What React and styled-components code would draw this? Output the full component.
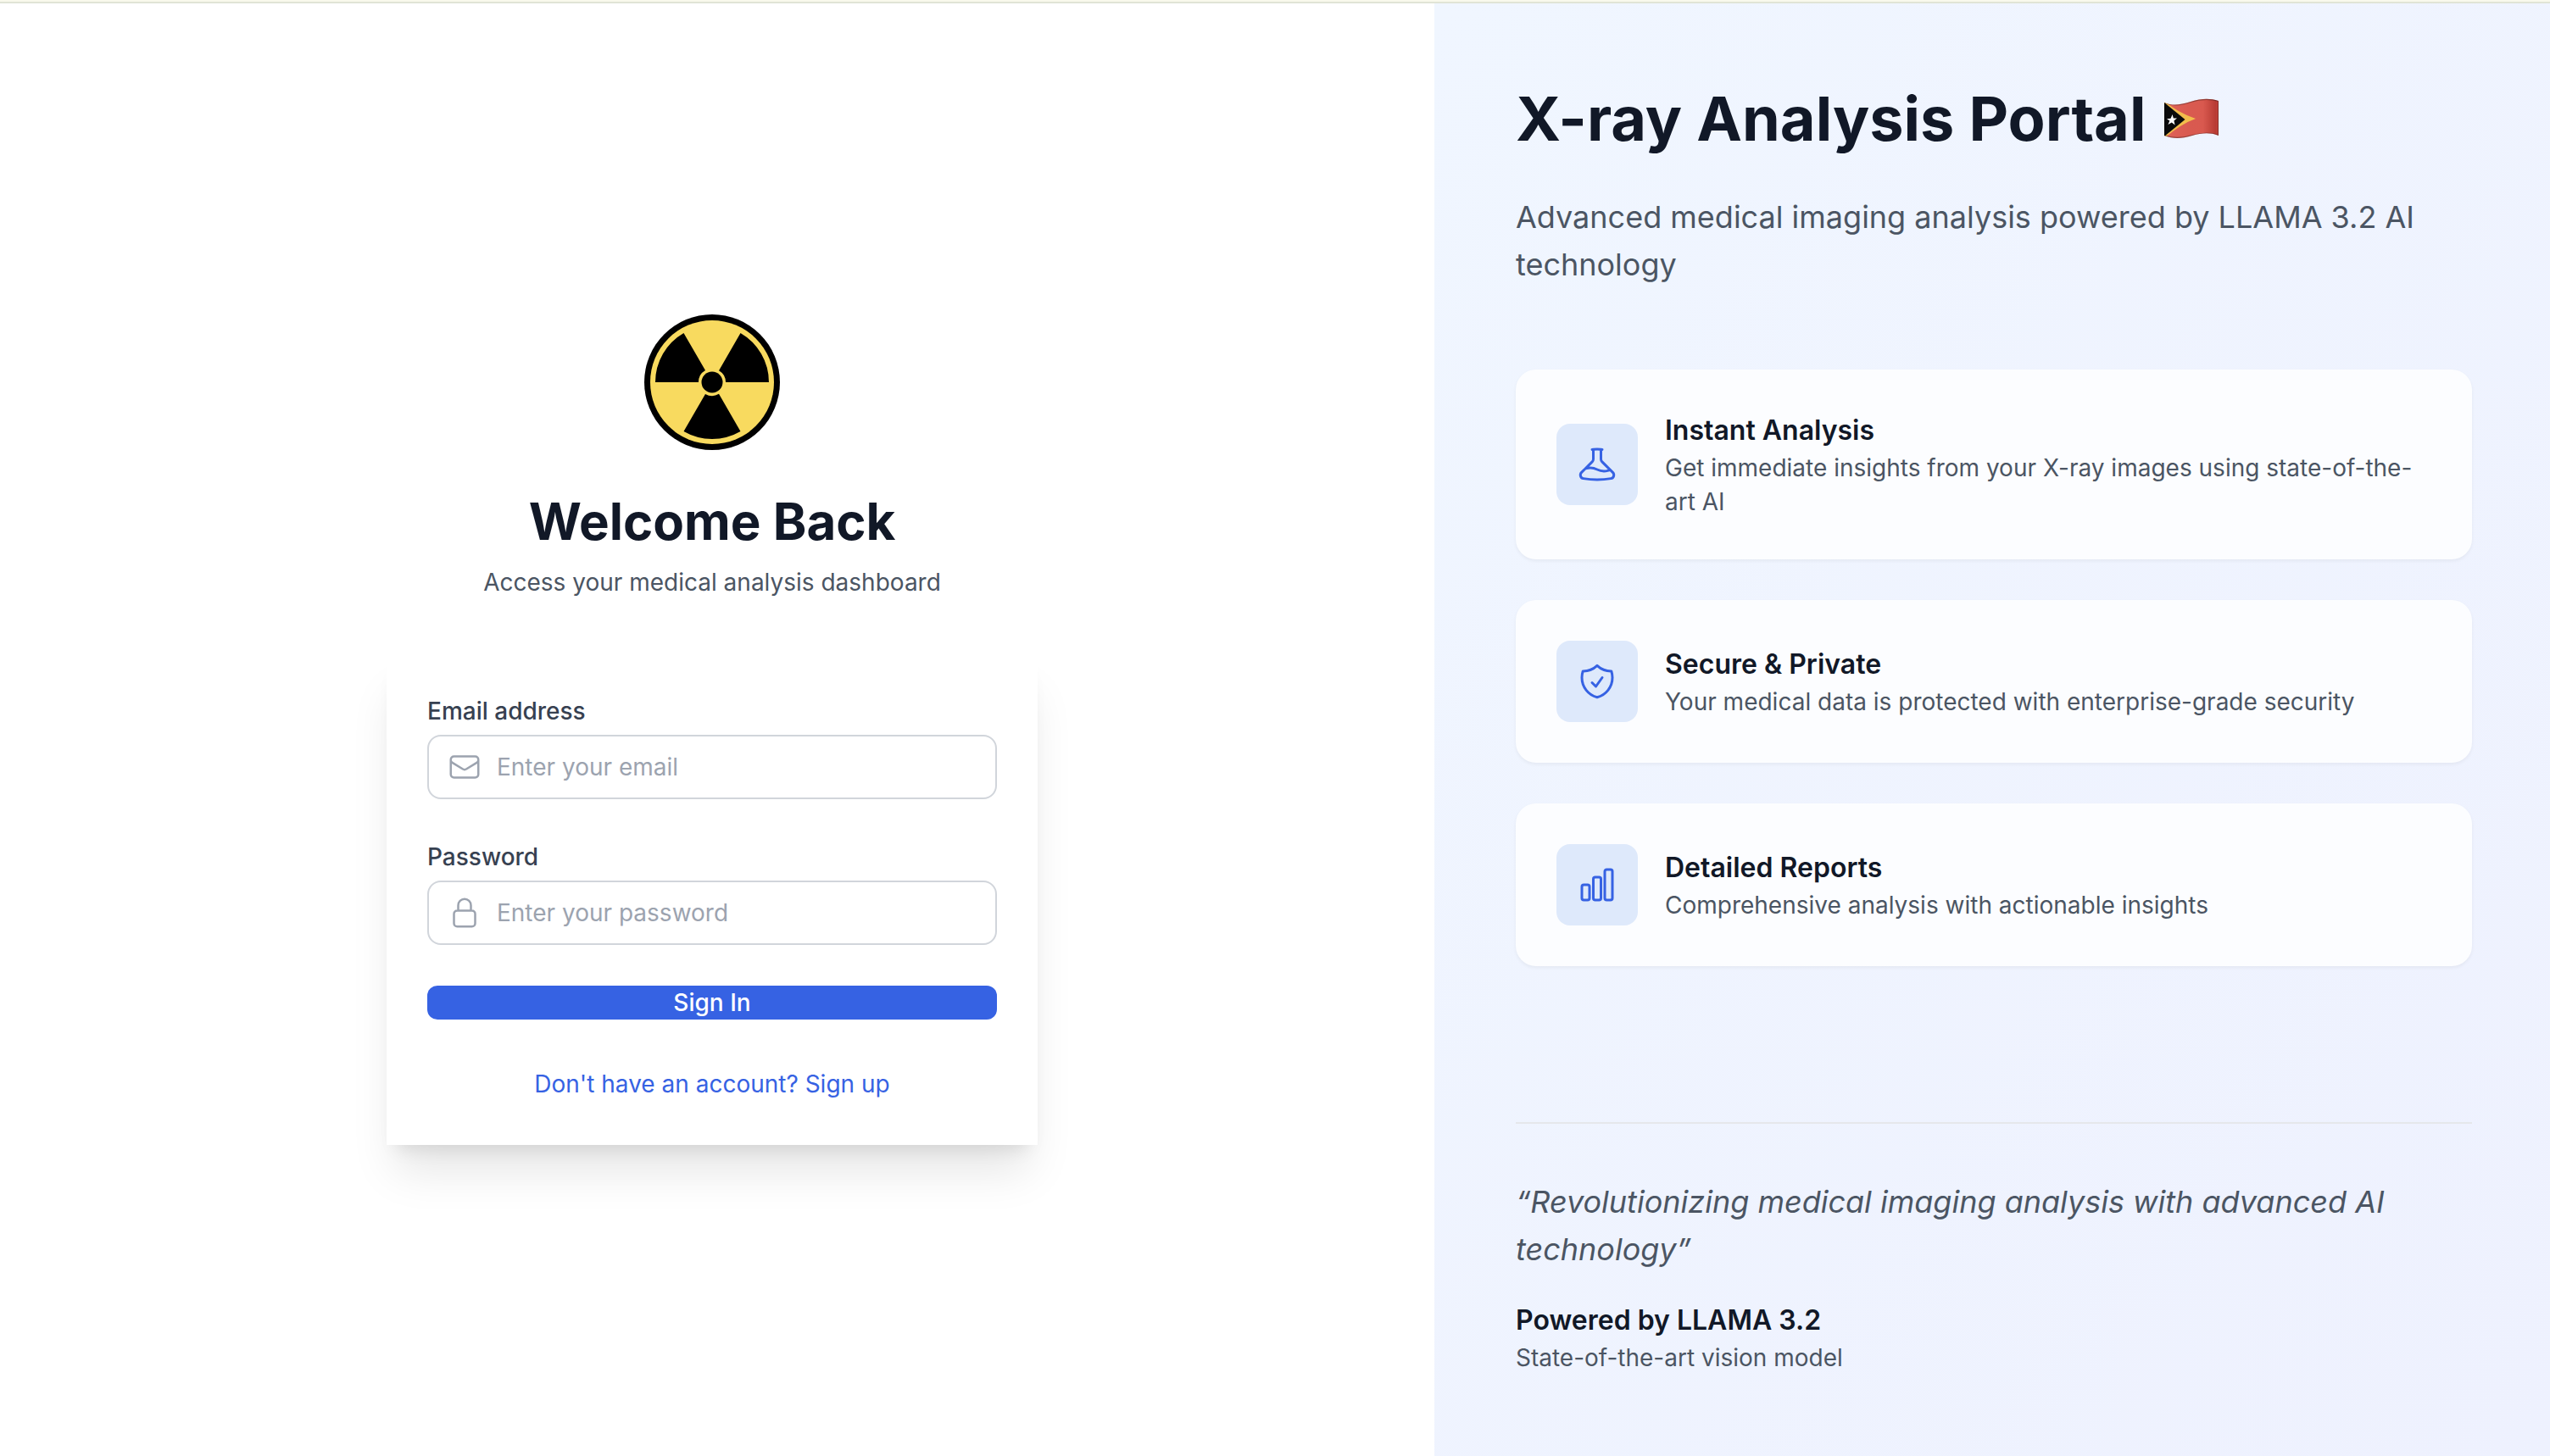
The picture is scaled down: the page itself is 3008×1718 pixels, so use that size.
import React from "react";
import styled, { createGlobalStyle } from "styled-components";
import {
  HiOutlineBeaker,
  HiOutlineShieldCheck,
  HiOutlineChartBar,
  HiOutlineEnvelope,
  HiOutlineLockClosed,
} from "react-icons/hi2";

const GlobalStyle = createGlobalStyle`
  *, *::before, *::after { box-sizing: border-box; }
  body {
    margin: 0;
    background: #ffffff;
    font-family: Inter, "Liberation Sans", sans-serif;
    -webkit-font-smoothing: antialiased;
  }
  h1, h2, h3, p, ul, blockquote { margin: 0; padding: 0; }
`;

const Page = styled.div`
  display: grid;
  min-height: 100vh;
  border-top: 2px solid #f9f9ec;
`;

const Shell = styled.div`
  display: grid;
  grid-template-columns: 9fr 7fr;
  border-top: 2px solid #e0e4d6;
`;

const LoginPane = styled.main`
  display: flex;
  flex-direction: column;
  align-items: center;
  justify-content: center;
  padding: 96px 108px 96px 96px;
`;

const LoginColumn = styled.div`
  width: 100%;
  max-width: 768px;
`;

const Intro = styled.header`
  display: flex;
  flex-direction: column;
  align-items: center;
  text-align: center;
  margin-bottom: 64px;
`;

const Logo = styled.svg`
  width: 160px;
  height: 160px;
  margin-bottom: 48px;
`;

const Welcome = styled.h2`
  font-size: 60px;
  line-height: 72px;
  font-weight: 700;
  color: #111827;
  margin-bottom: 16px;
`;

const Muted = styled.p`
  font-size: 28px;
  line-height: 40px;
  color: #4b5563;
`;

const LoginForm = styled.form`
  display: flex;
  flex-direction: column;
  gap: 48px;
  padding: 48px;
  background: #ffffff;
  box-shadow: 0 40px 50px -10px rgba(0, 0, 0, 0.1),
    0 16px 20px -12px rgba(0, 0, 0, 0.1);
`;

const Field = styled.div`
  display: flex;
  flex-direction: column;
  gap: 8px;
`;

const Label = styled.label`
  font-size: 28px;
  line-height: 40px;
  font-weight: 500;
  color: #374151;
`;

const InputFrame = styled.div`
  display: flex;
  align-items: center;
  gap: 18px;
  height: 76px;
  padding: 0 22px;
  border: 2px solid #d1d5db;
  border-radius: 16px;
  color: #9ca3af;

  svg {
    flex: none;
    width: 40px;
    height: 40px;
  }
`;

const Input = styled.input`
  flex: 1;
  min-width: 0;
  padding: 0;
  border: 0;
  outline: 0;
  background: transparent;
  font-family: inherit;
  font-size: 28px;
  line-height: 40px;
  color: #111827;

  &::placeholder {
    color: #9ca3af;
    opacity: 1;
  }
`;

const SubmitButton = styled.button`
  width: 100%;
  padding: 0;
  border: 0;
  border-radius: 12px;
  background: #3662e3;
  color: #ffffff;
  font-family: inherit;
  font-size: 28px;
  line-height: 40px;
  font-weight: 500;
  cursor: pointer;
`;

const SignUpRow = styled.p`
  padding-top: 4px;
  line-height: 48px;
  font-size: 28px;
  text-align: center;
`;

const SignUpLink = styled.a`
  color: #3662e3;
  text-decoration: none;
`;

const InfoPane = styled.aside`
  display: flex;
  flex-direction: column;
  justify-content: space-between;
  padding: 96px 92px 96px 96px;
  background: linear-gradient(to bottom right, #f0f6ff, #eef1fe);
`;

const Title = styled.h1`
  display: flex;
  align-items: center;
  gap: 20px;
  font-size: 72px;
  line-height: 80px;
  font-weight: 700;
  color: #111827;
  margin-bottom: 48px;
`;

const Flag = styled.svg`
  flex: none;
  width: 68px;
  height: 52px;
`;

const Lead = styled.p`
  font-size: 36px;
  line-height: 56px;
  color: #4b5563;
`;

const Features = styled.ul`
  display: flex;
  flex-direction: column;
  gap: 48px;
  margin-top: 96px;
  list-style: none;
`;

const FeatureCard = styled.li`
  display: flex;
  align-items: center;
  gap: 32px;
  padding: 48px;
  border-radius: 24px;
  background: #fcfdff;
  box-shadow: 0 2px 4px rgba(0, 0, 0, 0.05);
`;

const IconTile = styled.span`
  flex: none;
  display: grid;
  place-items: center;
  width: 96px;
  height: 96px;
  border-radius: 16px;
  background: #dee9fb;
  color: #3662e3;

  svg {
    width: 48px;
    height: 48px;
  }
`;

const Strong = styled.h3`
  font-size: 32px;
  line-height: 48px;
  font-weight: 600;
  color: #111827;
`;

const Footer = styled.footer`
  padding-top: 64px;
  border-top: 2px solid #e5e7eb;
`;

const Quote = styled.blockquote`
  font-size: 36px;
  line-height: 56px;
  font-style: italic;
  color: #4b5563;
  margin-bottom: 32px;
`;

const features = [
  {
    icon: HiOutlineBeaker,
    title: "Instant Analysis",
    text: "Get immediate insights from your X-ray images using state-of-the-art AI",
  },
  {
    icon: HiOutlineShieldCheck,
    title: "Secure & Private",
    text: "Your medical data is protected with enterprise-grade security",
  },
  {
    icon: HiOutlineChartBar,
    title: "Detailed Reports",
    text: "Comprehensive analysis with actionable insights",
  },
];

function RadiationLogo() {
  const blade = "M-67 0 A67 67 0 0 1 -33.5 -58 L-8 -13.9 A16 16 0 0 0 -16 0 Z";
  return (
    <Logo viewBox="-80 -80 160 160" role="img" aria-label="Radiation symbol">
      <circle r="80" fill="#000000" />
      <circle r="73" fill="#f8da5f" />
      {[0, 120, 240].map((angle) => (
        <path key={angle} d={blade} transform={`rotate(${angle})`} />
      ))}
      <circle r="12.5" />
    </Logo>
  );
}

function TimorLesteFlag() {
  return (
    <Flag viewBox="0 0 68 52" role="img" aria-label="Flag of Timor-Leste">
      <defs>
        <linearGradient id="cloth" x1="0" x2="1" y1="0" y2="0">
          <stop offset="0" stopColor="#e0645a" />
          <stop offset="0.45" stopColor="#d95a50" />
          <stop offset="0.7" stopColor="#d9594f" />
          <stop offset="0.92" stopColor="#b83c34" />
          <stop offset="1" stopColor="#c9473e" />
        </linearGradient>
        <clipPath id="wave">
          <path d="M2 7 C12 11 20 10 33 6 C46 2 56 2 66 5 V46 C56 42 46 43 35 46 C22 50 12 50 2 46 Z" />
        </clipPath>
      </defs>
      <g clipPath="url(#wave)">
        <rect width="68" height="52" fill="url(#cloth)" />
        <path d="M2 5 Q18 19 39 26 Q22 32 2 49 Z" fill="#f2bd4b" />
        <path d="M2 7 L26.500 27 L2 47 Z" fill="#0b0b0b" />
        <path
          d="M11.600 21 L12.800 25.500 L17 25.600 L13.400 28.500 L14.600 33.500 L10.800 30.600 L6.400 33 L8.400 28.500 L5 26.200 L9.600 25.800 Z"
          fill="#ffffff"
        />
        <path
          d="M2 7 C12 11 20 10 33 6 C46 2 56 2 66 5 V46 C56 42 46 43 35 46 C22 50 12 50 2 46 Z"
          fill="none"
          stroke="#000000"
          strokeOpacity="0.3"
          strokeWidth="2"
        />
      </g>
    </Flag>
  );
}

export default function App() {
  return (
    <>
      <GlobalStyle />
      <Page>
        <Shell>
          <LoginPane>
            <LoginColumn>
              <Intro>
                <RadiationLogo />
                <Welcome>Welcome Back</Welcome>
                <Muted>Access your medical analysis dashboard</Muted>
              </Intro>
              <LoginForm onSubmit={(event) => event.preventDefault()}>
                <Field>
                  <Label htmlFor="email">Email address</Label>
                  <InputFrame>
                    <HiOutlineEnvelope aria-hidden="true" />
                    <Input id="email" type="email" placeholder="Enter your email" />
                  </InputFrame>
                </Field>
                <Field>
                  <Label htmlFor="password">Password</Label>
                  <InputFrame>
                    <HiOutlineLockClosed aria-hidden="true" />
                    <Input
                      id="password"
                      type="password"
                      placeholder="Enter your password"
                    />
                  </InputFrame>
                </Field>
                <SubmitButton type="submit">Sign In</SubmitButton>
                <SignUpRow>
                  <SignUpLink href="#signup">Don't have an account? Sign up</SignUpLink>
                </SignUpRow>
              </LoginForm>
            </LoginColumn>
          </LoginPane>
          <InfoPane>
            <div>
              <Title>
                X-ray Analysis Portal
                <TimorLesteFlag />
              </Title>
              <Lead>
                Advanced medical imaging analysis powered by LLAMA 3.2 AI technology
              </Lead>
              <Features>
                {features.map(({ icon: Icon, title, text }) => (
                  <FeatureCard key={title}>
                    <IconTile>
                      <Icon aria-hidden="true" />
                    </IconTile>
                    <div>
                      <Strong>{title}</Strong>
                      <Muted>{text}</Muted>
                    </div>
                  </FeatureCard>
                ))}
              </Features>
            </div>
            <Footer>
              <Quote>
                “Revolutionizing medical imaging analysis with advanced AI technology”
              </Quote>
              <Strong as="p">Powered by LLAMA 3.2</Strong>
              <Muted>State-of-the-art vision model</Muted>
            </Footer>
          </InfoPane>
        </Shell>
      </Page>
    </>
  );
}
